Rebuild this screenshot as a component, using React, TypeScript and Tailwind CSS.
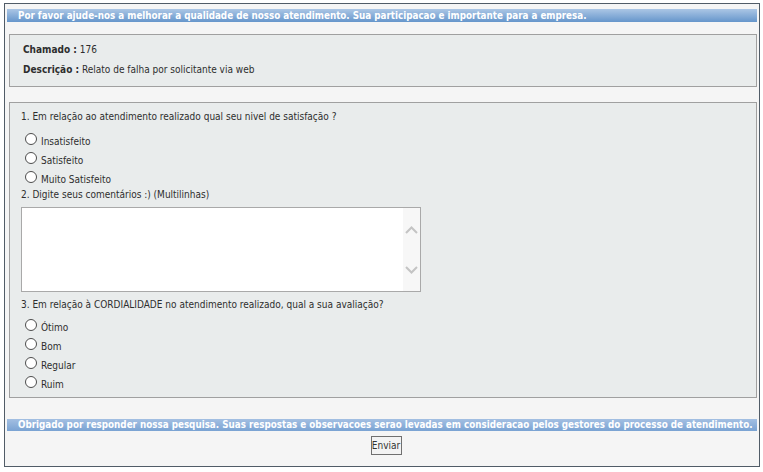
const font = { fontFamily: '"DejaVu Sans Condensed", "DejaVu Sans", Verdana, sans-serif' };

function Radio({ name, label }: { name: string; label: string }) {
  return (
    <label className="flex h-[19px] items-end">
      <input type="radio" name={name} className="peer sr-only" />
      <span className="mb-[4px] ml-[4px] h-[12px] w-[12px] rounded-full border border-[#4d4d4d] bg-white peer-checked:bg-[radial-gradient(circle,#333_35%,#fff_40%)]" />
      <span className="ml-[4px] leading-[14px]">{label}</span>
    </label>
  );
}

export default function App() {
  return (
    <div className="pt-[3px] pl-[4px] text-[10px] text-[#2e2e2e]" style={font}>
      <div className="flex h-[464px] w-[756px] flex-col border border-[#515c67] bg-[#f5f5f5]">
        <div className="mx-[2px] mt-[5px] h-[13px] bg-gradient-to-b from-[#abc6e5] to-[#6696cb] pl-[11px] text-[9.75px] font-bold leading-[13px] text-white whitespace-nowrap">
          Por favor ajude-nos a melhorar a qualidade de nosso atendimento. Sua participacao e importante para a empresa.
        </div>

        <div className="mt-[12px] ml-[4px] mr-[2px] h-[53px] border border-[#a0a0a0] bg-[#e9ecec] pl-[13px] pt-[8px]">
          <p className="leading-[14px]">
            <b>Chamado :</b> 176
          </p>
          <p className="mt-[6px] leading-[14px]">
            <b>Descrição :</b> Relato de falha por solicitante via web
          </p>
        </div>

        <div className="mt-[15px] ml-[4px] mr-[2px] h-[296px] border border-[#a0a0a0] bg-[#e9ecec] pl-[11px] pt-[7px]">
          <p className="leading-[14px]">1. Em relação ao atendimento realizado qual seu nivel de satisfação ?</p>
          <div className="mt-[6px]">
            <Radio name="q1" label="Insatisfeito" />
            <Radio name="q1" label="Satisfeito" />
            <Radio name="q1" label="Muito Satisfeito" />
          </div>
          <p className="mt-[1px] leading-[14px]">2. Digite seus comentários :) (Multilinhas)</p>
          <div className="mt-[5px] flex h-[85px] w-[400px] border border-[#a9a9a9] bg-white">
            <textarea className="h-full flex-1 resize-none bg-white outline-none" />
            <div className="flex w-[17px] flex-col items-center justify-between bg-[#f7f7f7] pt-[18px] pb-[17px]">
              <svg width="13" height="8" viewBox="0 0 13 8" fill="none" stroke="#c4c4c4" strokeWidth="2">
                <path d="M1 7l5.5-5.5L12 7" />
              </svg>
              <svg width="13" height="8" viewBox="0 0 13 8" fill="none" stroke="#c4c4c4" strokeWidth="2">
                <path d="M1 1l5.5 5.5L12 1" />
              </svg>
            </div>
          </div>
          <p className="mt-[6px] leading-[14px]">3. Em relação à CORDIALIDADE no atendimento realizado, qual a sua avaliação?</p>
          <div className="mt-[4px]">
            <Radio name="q3" label="Ótimo" />
            <Radio name="q3" label="Bom" />
            <Radio name="q3" label="Regular" />
            <Radio name="q3" label="Ruim" />
          </div>
        </div>

        <div className="mx-[2px] mt-[21px] h-[12px] bg-gradient-to-b from-[#a3bfe2] to-[#7aa3d3] pl-[11px] text-[9.75px] font-bold leading-[12px] text-white whitespace-nowrap">
          Obrigado por responder nossa pesquisa. Suas respostas e observacoes serao levadas em consideracao pelos gestores do processo de atendimento.
        </div>

        <div className="mt-[5px] flex justify-center pl-[8px]">
          <button className="h-[19px] w-[31px] border border-[#707070] bg-[#f3f3f3] text-[10px] leading-[17px] text-[#333]">
            Enviar
          </button>
        </div>
      </div>
    </div>
  );
}
